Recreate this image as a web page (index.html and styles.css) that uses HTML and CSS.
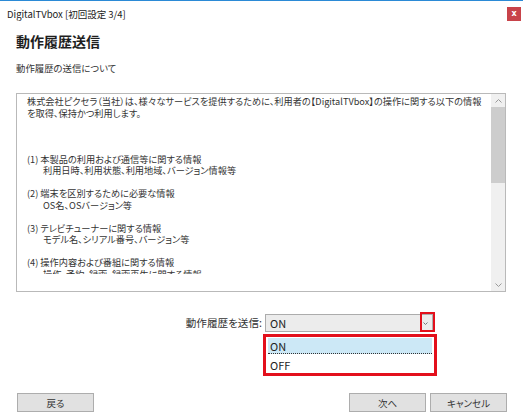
FILE: index.html
```html
<!DOCTYPE html>
<html lang="ja">
<head>
<meta charset="utf-8">
<title>DigitalTVbox</title>
<link rel="stylesheet" href="styles.css">
</head>
<body>
<div class="window">
  <div class="titlebar">
    <span class="title">DigitalTVbox [初回設定 3/4]</span>
    <span class="close">x</span>
  </div>
  <div class="main">
    <h1 class="heading">動作履歴送信</h1>
    <p class="subtitle">動作履歴の送信について</p>
    <div class="box">
      <div class="content">
        <div class="viewport">
          <p class="intro">株式会社ピクセラ（当社）は、様々なサービスを提供するために、利用者の【DigitalTVbox】の操作に関する以下の情報<br>を取得、保持かつ利用します。</p>
          <div class="item"><div>(1) 本製品の利用および通信等に関する情報</div><div class="sub">利用日時、利用状態、利用地域、バージョン情報等</div></div>
          <div class="item"><div>(2) 端末を区別するために必要な情報</div><div class="sub">OS名、OSバージョン等</div></div>
          <div class="item"><div>(3) テレビチューナーに関する情報</div><div class="sub">モデル名、シリアル番号、バージョン等</div></div>
          <div class="item"><div>(4) 操作内容および番組に関する情報</div><div class="sub">操作、予約、録画、録画再生に関する情報</div></div>
        </div>
      </div>
      <div class="scrollbar">
        <div class="sb-btn"><svg width="7" height="4" viewBox="0 0 7 4"><polyline points="0.5,3.5 3.5,0.5 6.5,3.5" fill="none" stroke="#9a9a9a" stroke-width="1"/></svg></div>
        <div class="sb-thumb"></div>
        <div class="sb-track"></div>
        <div class="sb-btn"><svg width="7" height="4" viewBox="0 0 7 4"><polyline points="0.5,0.5 3.5,3.5 6.5,0.5" fill="none" stroke="#9a9a9a" stroke-width="1"/></svg></div>
      </div>
    </div>
    <div class="combo-row">
      <span class="combo-label">動作履歴を送信:</span>
      <div class="combo">
        <span class="combo-value">ON</span>
        <span class="combo-arrow"><svg width="5" height="3" viewBox="0 0 5 3"><polyline points="0.5,0.5 2.5,2.5 4.5,0.5" fill="none" stroke="#777" stroke-width="1"/></svg></span>
        <span class="arrow-mark"></span>
        <div class="dropdown">
          <div class="option selected">ON</div>
          <div class="option">OFF</div>
        </div>
      </div>
    </div>
  </div>
  <div class="footer">
    <button class="btn">戻る</button>
    <div class="btn-group">
      <button class="btn">次へ</button>
      <button class="btn">キャンセル</button>
    </div>
  </div>
</div>
</body>
</html>
```

FILE: styles.css
```css
* { box-sizing: border-box; }
html, body { margin: 0; padding: 0; background: #fff; }
body {
  font-family: "Noto Sans CJK JP", "Noto Sans", sans-serif;
  font-feature-settings: "palt";
  color: #333;
}
.window {
  width: 523px;
  height: 420px;
  border-top: 1px solid #2b8ad6;
  display: flex;
  flex-direction: column;
  background: #fff;
}
.titlebar {
  height: 26px;
  display: flex;
  align-items: center;
  justify-content: space-between;
  padding: 0 2px 0 7px;
}
.title {
  font-size: 9.5px;
  color: #222;
}
.close {
  width: 14px;
  height: 14px;
  background: #c8434a;
  color: #fff;
  font-family: "DejaVu Sans", sans-serif;
  font-size: 8px;
  font-weight: bold;
  line-height: 13px;
  text-align: center;
}
.main {
  padding: 0 17px 0 16px;
}
.heading {
  margin: 6px 0 0;
  font-size: 14px;
  line-height: 17px;
  font-weight: bold;
  color: #1e1e1e;
}
.subtitle {
  margin: 12px 0 0;
  font-size: 9.4px;
  line-height: 12px;
}
.box {
  margin-top: 19px;
  height: 199px;
  border: 1px solid #b9b9b9;
  display: flex;
}
.content {
  flex: 1;
  padding: 2px 0 0 10px;
}
.viewport {
  height: 178px;
  overflow: hidden;
  font-size: 9.2px;
  line-height: 11.5px;
}
.intro {
  margin: 0 0 34.5px;
}
.item {
  margin-bottom: 11.5px;
}
.item .sub {
  padding-left: 16px;
}
.scrollbar {
  width: 14px;
  display: flex;
  flex-direction: column;
  background: #f0f0f0;
}
.sb-btn {
  height: 13px;
  display: flex;
  align-items: center;
  justify-content: center;
}
.sb-thumb {
  height: 76px;
  background: #cdcdcd;
}
.sb-track {
  flex: 1;
}
.combo-row {
  margin-top: 22px;
  display: flex;
  justify-content: flex-end;
  align-items: center;
  padding-right: 73px;
  gap: 3px;
}
.combo-label {
  font-size: 10.6px;
  line-height: 18px;
  color: #333;
}
.combo {
  position: relative;
  width: 168px;
  height: 18px;
  border: 1px solid #acacac;
  background: #ececec;
  display: flex;
  align-items: center;
  justify-content: space-between;
  padding: 0 4px 0 4px;
}
.combo-value {
  font-size: 11px;
  color: #222;
}
.combo-arrow {
  display: flex;
  align-items: center;
}
.arrow-mark {
  position: absolute;
  right: -3px;
  top: -3px;
  width: 15px;
  height: 20px;
  border: 2px solid #e3101c;
}
.dropdown {
  position: absolute;
  left: -3px;
  top: 19px;
  width: 174px;
  height: 42px;
  border: 3px solid #e3101c;
  background: #fff;
  padding: 1px 2px;
}
.option {
  height: 16px;
  font-size: 11px;
  line-height: 16px;
  padding-left: 2px;
  color: #222;
}
.option.selected {
  background: #cce8f6;
  border-bottom: 1px dotted #333;
  margin-bottom: 3px;
}
.footer {
  margin-top: auto;
  padding: 0 16px 8px 17px;
  display: flex;
  justify-content: space-between;
  align-items: center;
}
.btn-group {
  display: flex;
  gap: 4px;
}
.btn {
  width: 77px;
  height: 19px;
  border: 1px solid #adadad;
  background: #e1e1e1;
  font-family: "Noto Sans CJK JP", sans-serif;
  font-feature-settings: "palt";
  font-size: 9.5px;
  color: #333;
  padding: 0;
}
```
